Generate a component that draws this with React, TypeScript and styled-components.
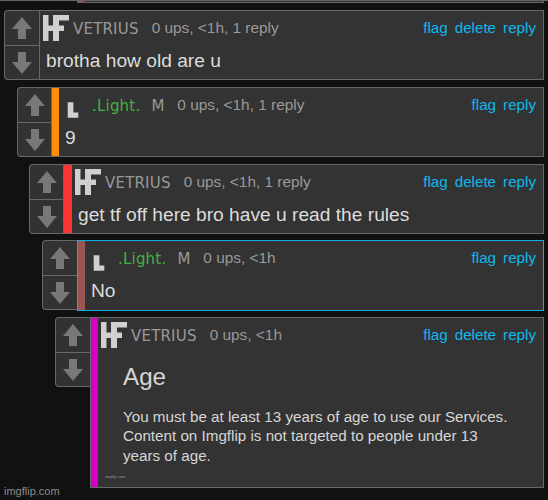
import styled, { createGlobalStyle } from "styled-components";

type CommentData = {
  id: number;
  indent: number;
  height: number;
  gap: number;
  voteWidth: number;
  bar?: string;
  barWidth?: number;
  active?: boolean;
  user: "VETRIUS" | ".Light.";
  meta: string;
  links: string[];
  text?: string;
};

const comments: CommentData[] = [
  {
    id: 1,
    indent: 4,
    height: 70,
    gap: 7,
    voteWidth: 35,
    user: "VETRIUS",
    meta: "0 ups, <1h, 1 reply",
    links: ["flag", "delete", "reply"],
    text: "brotha how old are u",
  },
  {
    id: 2,
    indent: 17,
    height: 70,
    gap: 7,
    voteWidth: 34,
    bar: "#ff8c0c",
    barWidth: 7,
    user: ".Light.",
    meta: "0 ups, <1h, 1 reply",
    links: ["flag", "reply"],
    text: "9",
  },
  {
    id: 3,
    indent: 29,
    height: 70,
    gap: 6,
    voteWidth: 34,
    bar: "#ff3434",
    barWidth: 8,
    user: "VETRIUS",
    meta: "0 ups, <1h, 1 reply",
    links: ["flag", "delete", "reply"],
    text: "get tf off here bro have u read the rules",
  },
  {
    id: 4,
    indent: 42,
    height: 71,
    gap: 6,
    voteWidth: 35,
    bar: "#9a5555",
    barWidth: 7,
    active: true,
    user: ".Light.",
    meta: "0 ups, <1h",
    links: ["flag", "reply"],
    text: "No",
  },
  {
    id: 5,
    indent: 55,
    height: 171,
    gap: 0,
    voteWidth: 35,
    bar: "#d800c8",
    barWidth: 7,
    user: "VETRIUS",
    meta: "0 ups, <1h",
    links: ["flag", "delete", "reply"],
  },
];

const App = () => {
  return (
    <>
      <GlobalStyle />
      <StPage>
        <StPrevious>
          <StPreviousBar />
          <StPreviousBox />
        </StPrevious>
        {comments.map((comment) => (
          <Comment key={comment.id} comment={comment} />
        ))}
        <StWatermark>imgflip.com</StWatermark>
      </StPage>
    </>
  );
};

const Comment = ({ comment }: { comment: CommentData }) => {
  const isLight = comment.user === ".Light.";
  return (
    <StComment
      $indent={comment.indent}
      $height={comment.height}
      $gap={comment.gap}
    >
      <StVotes $width={comment.voteWidth}>
        <StVote>
          <Arrow />
        </StVote>
        <StVote $down>
          <Arrow />
        </StVote>
      </StVotes>
      <StBox $active={comment.active}>
        {comment.bar && <StBar $color={comment.bar} $width={comment.barWidth} />}
        <StContent>
          <StHeader>
            <StIcon>{isLight ? <LightIcon /> : <VetriusIcon />}</StIcon>
            <StUser $green={isLight}>{comment.user}</StUser>
            {isLight && <StMark>M</StMark>}
            <StMeta>{comment.meta}</StMeta>
            <StLinks>
              {comment.links.map((link) => (
                <StLink key={link}>{link}</StLink>
              ))}
            </StLinks>
          </StHeader>
          {comment.text ? <StText>{comment.text}</StText> : <Rules />}
        </StContent>
      </StBox>
    </StComment>
  );
};

const Rules = () => (
  <StRules>
    <StTitle>Age</StTitle>
    <StParagraph>
      You must be at least 13 years of age to use our Services.
      <br />
      Content on Imgflip is not targeted to people under 13
      <br />
      years of age.
    </StParagraph>
    <StTiny>imgflip.com</StTiny>
  </StRules>
);

const Arrow = () => (
  <svg width="20" height="22" viewBox="0 0 20 22">
    <path d="M10 0 20 12H14V22H6V12H0Z" fill="#787878" />
  </svg>
);

const VetriusIcon = () => (
  <svg width="26" height="26" viewBox="0 0 26 26">
    <path
      d="M0 0H5.5V10.5H10V0H26V5.5H16V10.5H21V16H16V26H10V16H5.5V26H0Z"
      fill="#d0d0d0"
    />
  </svg>
);

const LightIcon = () => (
  <svg width="26" height="26" viewBox="0 0 26 26">
    <path d="M5.7 10.3H11.4V20.5H16.3V25.7H5.7Z" fill="#d0d0d0" />
  </svg>
);

export default App;

const GlobalStyle = createGlobalStyle`
  body {
    margin: 0;
    background-color: #111;
    overflow: hidden;
  }
`;

const StPage = styled.div`
  position: relative;
  width: 548px;
  height: 500px;
  box-sizing: border-box;
  background-color: #111;
  font-family: "Liberation Sans", Arial, sans-serif;
  overflow: hidden;
`;

const StPrevious = styled.div`
  display: flex;
  height: 3px;
  margin-bottom: 7px;
  padding: 0 4px 0 77px;
  background: linear-gradient(#666 0 1px, transparent 1px);
`;

const StPreviousBar = styled.div`
  width: 7px;
  background-color: #805c60;
`;

const StPreviousBox = styled.div`
  flex: 1;
  box-sizing: border-box;
  border: solid #666;
  border-width: 1px 1px 1px 0;
  background-color: #333;
`;

const StComment = styled.div<{ $indent: number; $height: number; $gap: number }>`
  display: flex;
  align-items: flex-start;
  height: ${({ $height }) => $height}px;
  margin: 0 4px ${({ $gap }) => $gap}px ${({ $indent }) => $indent}px;
`;

const StVotes = styled.div<{ $width: number }>`
  display: flex;
  flex-direction: column;
  flex-shrink: 0;
  box-sizing: border-box;
  width: ${({ $width }) => $width}px;
  height: 70px;
  border: 1px solid #686868;
  border-right: none;
  border-radius: 4px 0 0 4px;
  background-color: #323232;
`;

const StVote = styled.div<{ $down?: boolean }>`
  display: flex;
  justify-content: center;
  align-items: center;
  box-sizing: border-box;
  height: 34px;
  ${({ $down }) => $down && "border-top: 1px solid #686868;"}

  & svg {
    ${({ $down }) => $down && "transform: scaleY(-1);"}
  }
`;

const StBox = styled.div<{ $active?: boolean }>`
  display: flex;
  flex: 1;
  align-self: stretch;
  box-sizing: border-box;
  border: 1px solid ${({ $active }) => ($active ? "#12b0e2" : "#686868")};
  background-color: #333;
`;

const StBar = styled.div<{ $color: string; $width?: number }>`
  flex-shrink: 0;
  width: ${({ $width }) => $width}px;
  background-color: ${({ $color }) => $color};
`;

const StContent = styled.div`
  flex: 1;
`;

const StHeader = styled.div`
  display: flex;
  align-items: flex-start;
  height: 38px;
  padding: 0 7px 0 3px;
  white-space: nowrap;
`;

const StIcon = styled.div`
  display: flex;
  margin-top: 4px;
`;

const StUser = styled.div<{ $green?: boolean }>`
  margin: 9px 0 0 4px;
  font-family: "DejaVu Sans", Verdana, sans-serif;
  font-size: 15px;
  line-height: 18px;
  letter-spacing: 0.2px;
  color: ${({ $green }) => ($green ? "#45b045" : "#999")};
`;

const StMark = styled.div`
  margin: 9px 0 0 11px;
  font-family: "DejaVu Sans", Verdana, sans-serif;
  font-size: 15px;
  line-height: 18px;
  color: #999;
`;

const StMeta = styled.div`
  margin: 8px 0 0 13px;
  font-size: 15.4px;
  line-height: 18px;
  color: #999;
`;

const StLinks = styled.div`
  display: flex;
  gap: 7px;
  margin: 8px 0 0 auto;
`;

const StLink = styled.span`
  font-size: 15.2px;
  line-height: 18px;
  color: #0cb8ee;
`;

const StText = styled.div`
  padding-left: 6px;
  font-size: 19.2px;
  line-height: 24px;
  color: #dcdcdc;
  white-space: nowrap;
`;

const StRules = styled.div`
  padding-left: 25px;
  color: #d6d6d6;
`;

const StTitle = styled.div`
  margin-top: 6px;
  font-size: 24.2px;
  line-height: 30px;
`;

const StParagraph = styled.div`
  margin-top: 15px;
  font-size: 15.2px;
  line-height: 19.3px;
  white-space: nowrap;
`;

const StTiny = styled.div`
  margin: 9px 0 0 -18px;
  font-size: 4px;
  line-height: 6px;
  color: #999;
`;

const StWatermark = styled.div`
  position: absolute;
  left: 4px;
  bottom: 2px;
  font-size: 11px;
  line-height: 14px;
  color: #8c8c8c;
`;
